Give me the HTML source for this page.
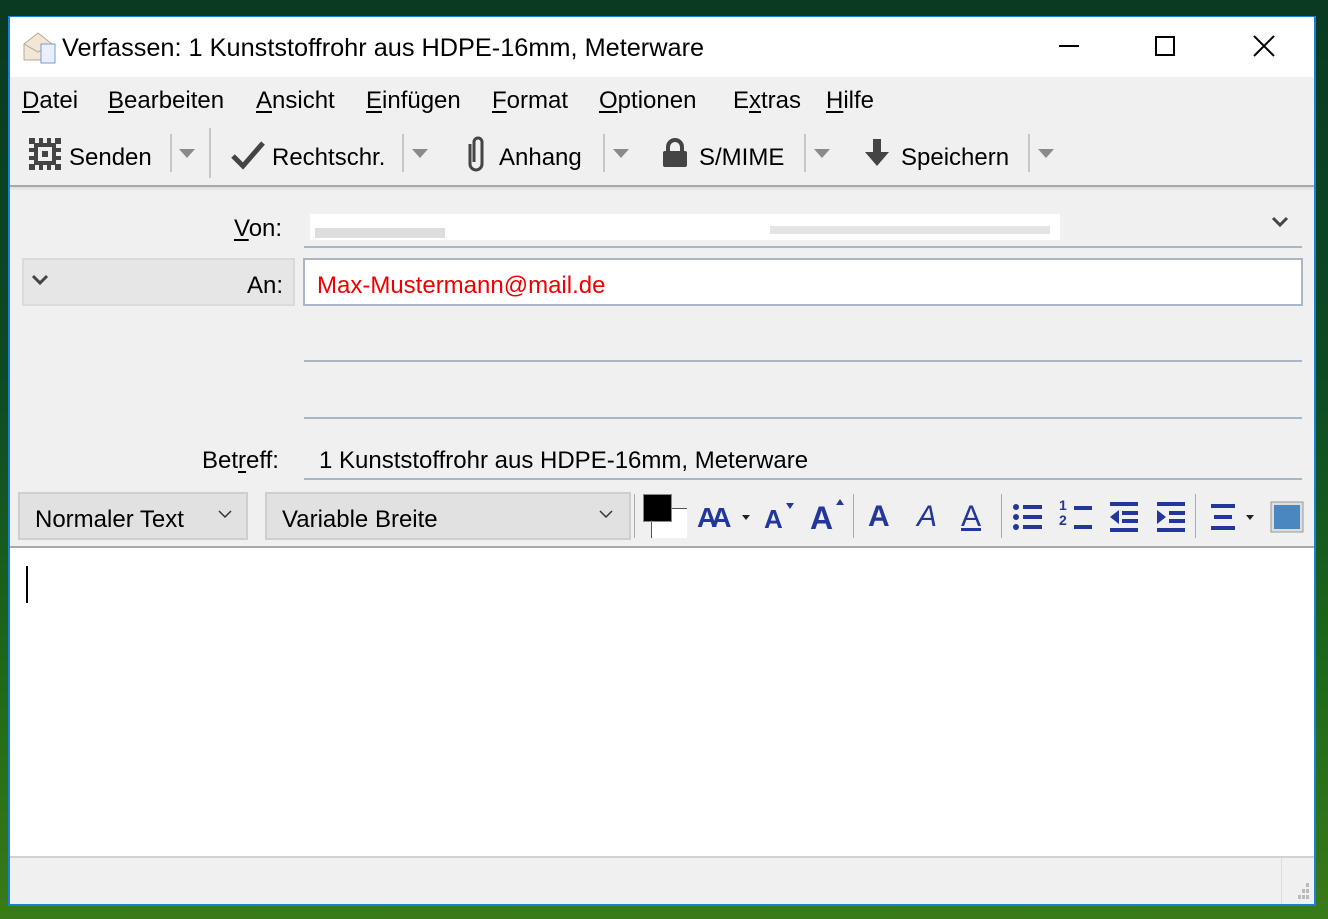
<!DOCTYPE html>
<html><head><meta charset="utf-8"><style>
*{margin:0;padding:0;box-sizing:border-box}
body{width:1328px;height:919px;overflow:hidden;position:relative;font-family:"Liberation Sans",sans-serif;color:#000;
background:linear-gradient(180deg,#0a3a22 0%,#0c4a24 40%,#1f6a1a 75%,#3a7a18 100%)}
.a{position:absolute;white-space:nowrap}
.win{position:absolute;left:8px;top:16px;width:1308px;height:890px;border:2px solid #1a7fd6;background:#f0f0f0;border-top-width:1px}
.u{text-decoration:underline;text-decoration-thickness:2px;text-underline-offset:3px}
.t{font-size:24px}
.sep{position:absolute;width:2px;background:#c6c6c6}
.dd{position:absolute;width:0;height:0;border-left:8px solid transparent;border-right:8px solid transparent;border-top:9px solid #8a8a8a}
.fi{position:absolute;font-weight:bold;color:#23369a;font-family:"Liberation Sans",sans-serif}
</style></head><body>
<div class="win"></div>
<div class="a" style="left:10px;top:17px;width:1304px;height:60px;background:#fff"></div>
<svg class="a" style="left:22px;top:30px" width="36" height="36" viewBox="0 0 36 36"><path d="M2 14 L16 3 L30 14 L30 30 L2 30 Z" fill="#f2e6d6" stroke="#b8a890"/><path d="M2 14 L16 22 L30 14" fill="none" stroke="#b8a890"/><rect x="19" y="14" width="14" height="19" fill="#e8f0ff" stroke="#7a9ac8"/></svg>
<div class="a" style="left:62px;top:34px;font-size:25.3px">Verfassen: 1 Kunststoffrohr aus HDPE-16mm, Meterware</div>
<div class="a" style="left:1059px;top:45px;width:20px;height:2px;background:#000"></div>
<div class="a" style="left:1155px;top:36px;width:20px;height:20px;border:2px solid #000"></div>
<svg class="a" style="left:1253px;top:35px" width="22" height="22"><path d="M1 1L21 21M21 1L1 21" stroke="#000" stroke-width="2"/></svg>
<div class="a t" style="left:22px;top:87px"><span class="u">D</span>atei</div>
<div class="a t" style="left:108px;top:87px"><span class="u">B</span>earbeiten</div>
<div class="a t" style="left:256px;top:87px"><span class="u">A</span>nsicht</div>
<div class="a t" style="left:366px;top:87px"><span class="u">E</span>infügen</div>
<div class="a t" style="left:492px;top:87px"><span class="u">F</span>ormat</div>
<div class="a t" style="left:599px;top:87px"><span class="u">O</span>ptionen</div>
<div class="a t" style="left:733px;top:87px">E<span class="u">x</span>tras</div>
<div class="a t" style="left:826px;top:87px"><span class="u">H</span>ilfe</div>
<svg class="a" style="left:29px;top:138px" width="32" height="32" viewBox="0 0 32 32"><g fill="#444"><rect x="0" y="0" width="32" height="32"/></g><g fill="#f0f0f0"><rect x="6" y="0" width="4" height="5"/><rect x="14" y="0" width="4" height="5"/><rect x="22" y="0" width="4" height="5"/><rect x="6" y="27" width="4" height="5"/><rect x="14" y="27" width="4" height="5"/><rect x="22" y="27" width="4" height="5"/><rect x="0" y="6" width="5" height="4"/><rect x="0" y="14" width="5" height="4"/><rect x="0" y="22" width="5" height="4"/><rect x="27" y="6" width="5" height="4"/><rect x="27" y="14" width="5" height="4"/><rect x="27" y="22" width="5" height="4"/><rect x="9" y="9" width="14" height="14"/></g><rect x="13" y="13" width="6" height="6" fill="#444"/></svg>
<div class="a t" style="left:69px;top:144px">Senden</div>
<div class="sep" style="left:170px;top:134px;height:38px"></div>
<div class="dd" style="left:179px;top:149px"></div>
<div class="sep" style="left:209px;top:128px;height:50px"></div>
<svg class="a" style="left:231px;top:140px" width="34" height="30"><path d="M2 16 L12 26 L32 3" fill="none" stroke="#444" stroke-width="5"/></svg>
<div class="a t" style="left:272px;top:144px">Rechtschr.</div>
<div class="sep" style="left:402px;top:134px;height:38px"></div>
<div class="dd" style="left:412px;top:149px"></div>
<svg class="a" style="left:465px;top:136px" width="22" height="36"><path d="M5 8 V28 A6 6 0 0 0 17 28 V6 A4 4 0 0 0 9 6 V26" fill="none" stroke="#444" stroke-width="3"/></svg>
<div class="a t" style="left:499px;top:144px">Anhang</div>
<div class="sep" style="left:603px;top:134px;height:38px"></div>
<div class="dd" style="left:613px;top:149px"></div>
<svg class="a" style="left:661px;top:138px" width="28" height="30"><path d="M7 14 V9 A7 7 0 0 1 21 9 V14" fill="none" stroke="#444" stroke-width="4"/><rect x="2" y="13" width="24" height="16" rx="2" fill="#444"/></svg>
<div class="a t" style="left:699px;top:144px">S/MIME</div>
<div class="sep" style="left:804px;top:134px;height:38px"></div>
<div class="dd" style="left:814px;top:149px"></div>
<svg class="a" style="left:864px;top:139px" width="26" height="28"><path d="M9 0 H17 V13 H25 L13 27 L1 13 H9 Z" fill="#444"/></svg>
<div class="a t" style="left:901px;top:144px">Speichern</div>
<div class="sep" style="left:1028px;top:134px;height:38px"></div>
<div class="dd" style="left:1038px;top:149px"></div>
<div class="a" style="left:10px;top:185px;width:1304px;height:2px;background:#a8a8a8"></div>
<div class="a" style="left:10px;top:187px;width:1304px;height:4px;background:linear-gradient(#dcdcdc,#f0f0f0)"></div>
<div class="a t" style="left:234px;top:215px"><span class="u">V</span>on:</div>
<div class="a" style="left:310px;top:214px;width:750px;height:26px;background:#fff"></div>
<div class="a" style="left:315px;top:228px;width:130px;height:10px;background:#ddd"></div>
<div class="a" style="left:770px;top:226px;width:280px;height:8px;background:#e4e4e4"></div>
<svg class="a" style="left:1271px;top:215px" width="18" height="14"><path d="M2 3 L9 10 L16 3" fill="none" stroke="#444" stroke-width="3"/></svg>
<div class="a" style="left:304px;top:246px;width:998px;height:2px;background:#a9b6c8"></div>
<div class="a" style="left:22px;top:258px;width:273px;height:48px;background:#e6e6e6;border:2px solid #dadada"></div>
<svg class="a" style="left:31px;top:273px" width="18" height="14"><path d="M2 3 L9 10 L16 3" fill="none" stroke="#444" stroke-width="3"/></svg>
<div class="a t" style="left:247px;top:272px">An:</div>
<div class="a" style="left:303px;top:258px;width:1000px;height:48px;background:#fff;border:2px solid #aab7c9"></div>
<div class="a t" style="left:317px;top:272px;color:#e00">Max-Mustermann@mail.de</div>
<div class="a" style="left:304px;top:360px;width:998px;height:2px;background:#a9b6c8"></div>
<div class="a" style="left:304px;top:417px;width:998px;height:2px;background:#a9b6c8"></div>
<div class="a t" style="left:202px;top:447px">Bet<span class="u">r</span>eff:</div>
<div class="a t" style="left:319px;top:447px">1 Kunststoffrohr aus HDPE-16mm, Meterware</div>
<div class="a" style="left:304px;top:478px;width:998px;height:2px;background:#a9b6c8"></div>
<div class="a" style="left:18px;top:492px;width:230px;height:48px;background:#e1e1e1;border:2px solid #cfcfcf"></div>
<div class="a t" style="left:35px;top:506px">Normaler Text</div>
<svg class="a" style="left:218px;top:509px" width="14" height="10"><path d="M1 2 L7 8 L13 2" fill="none" stroke="#333" stroke-width="1.5"/></svg>
<div class="a" style="left:265px;top:492px;width:366px;height:48px;background:#e1e1e1;border:2px solid #cfcfcf"></div>
<div class="a t" style="left:282px;top:506px">Variable Breite</div>
<svg class="a" style="left:599px;top:509px" width="14" height="10"><path d="M1 2 L7 8 L13 2" fill="none" stroke="#333" stroke-width="1.5"/></svg>
<div class="sep" style="left:634px;top:494px;height:44px;width:1px;background:#aaa"></div>
<div class="a" style="left:651px;top:508px;width:36px;height:30px;background:#fff;border-left:1px solid #555;border-top:1px solid #555"></div>
<div class="a" style="left:643px;top:494px;width:29px;height:28px;background:#000;border:1px solid #888"></div>
<div class="fi" style="left:697px;top:502px;font-size:28px;letter-spacing:-6px">AA</div>
<div class="a" style="left:742px;top:515px;border-left:4px solid transparent;border-right:4px solid transparent;border-top:5px solid #222;width:0"></div>
<div class="fi" style="left:764px;top:504px;font-size:26px">A</div>
<div class="a" style="left:786px;top:503px;border-left:4px solid transparent;border-right:4px solid transparent;border-top:6px solid #23369a;width:0"></div>
<div class="fi" style="left:810px;top:500px;font-size:32px">A</div>
<div class="a" style="left:836px;top:499px;border-left:4px solid transparent;border-right:4px solid transparent;border-bottom:6px solid #23369a;width:0"></div>
<div class="sep" style="left:853px;top:494px;height:44px;width:1px;background:#aaa"></div>
<div class="fi" style="left:868px;top:500px;font-size:30px">A</div>
<div class="fi" style="left:917px;top:500px;font-size:30px;font-weight:normal;font-style:italic">A</div>
<div class="fi" style="left:961px;top:500px;font-size:30px;font-weight:normal;text-decoration:underline">A</div>
<div class="sep" style="left:1001px;top:494px;height:44px;width:1px;background:#aaa"></div>
<svg class="a" style="left:1012px;top:502px" width="32" height="30" fill="#23369a"><circle cx="4" cy="5" r="3"/><circle cx="4" cy="15" r="3"/><circle cx="4" cy="25" r="3"/><rect x="11" y="3" width="19" height="4"/><rect x="11" y="13" width="19" height="4"/><rect x="11" y="23" width="19" height="4"/></svg>
<div class="a" style="left:1059px;top:498px;font-size:14px;font-weight:bold;color:#23369a;line-height:15px">1<br>2</div>
<svg class="a" style="left:1072px;top:502px" width="22" height="30" fill="#23369a"><rect x="2" y="4" width="18" height="4"/><rect x="2" y="23" width="18" height="4"/></svg>
<svg class="a" style="left:1108px;top:500px" width="32" height="34" fill="#23369a"><rect x="2" y="2" width="28" height="4"/><rect x="14" y="11" width="16" height="4"/><rect x="14" y="19" width="16" height="4"/><rect x="2" y="28" width="28" height="4"/><path d="M2 17 L11 10 V24 Z"/></svg>
<svg class="a" style="left:1155px;top:500px" width="32" height="34" fill="#23369a"><rect x="2" y="2" width="28" height="4"/><rect x="14" y="11" width="16" height="4"/><rect x="14" y="19" width="16" height="4"/><rect x="2" y="28" width="28" height="4"/><path d="M11 17 L2 10 V24 Z"/></svg>
<div class="sep" style="left:1195px;top:494px;height:44px;width:1px;background:#aaa"></div>
<svg class="a" style="left:1209px;top:502px" width="28" height="30" fill="#23369a"><rect x="2" y="2" width="24" height="4"/><rect x="5" y="13" width="18" height="4"/><rect x="2" y="24" width="24" height="4"/></svg>
<div class="a" style="left:1246px;top:515px;border-left:4px solid transparent;border-right:4px solid transparent;border-top:5px solid #222;width:0"></div>
<svg class="a" style="left:1270px;top:501px" width="34" height="32"><rect x="1" y="1" width="32" height="30" fill="#ddd" stroke="#999"/><rect x="4" y="4" width="26" height="24" fill="#4a86c0"/></svg>
<div class="a" style="left:10px;top:546px;width:1304px;height:2px;background:#a8a8a8"></div>
<div class="a" style="left:10px;top:548px;width:1304px;height:308px;background:#fff"></div>
<div class="a" style="left:26px;top:566px;width:2px;height:37px;background:#000"></div>
<div class="a" style="left:10px;top:856px;width:1304px;height:2px;background:#d2d2d2"></div>
<div class="a" style="left:1281px;top:858px;width:1px;height:46px;background:#dcdcdc"></div>
<svg class="a" style="left:1294px;top:883px" width="18" height="18" fill="#bbb"><rect x="12" y="0" width="3" height="4"/><rect x="8" y="6" width="3" height="4"/><rect x="12" y="6" width="3" height="4"/><rect x="4" y="12" width="3" height="4"/><rect x="8" y="12" width="3" height="4"/><rect x="12" y="12" width="3" height="4"/></svg>
</body></html>
